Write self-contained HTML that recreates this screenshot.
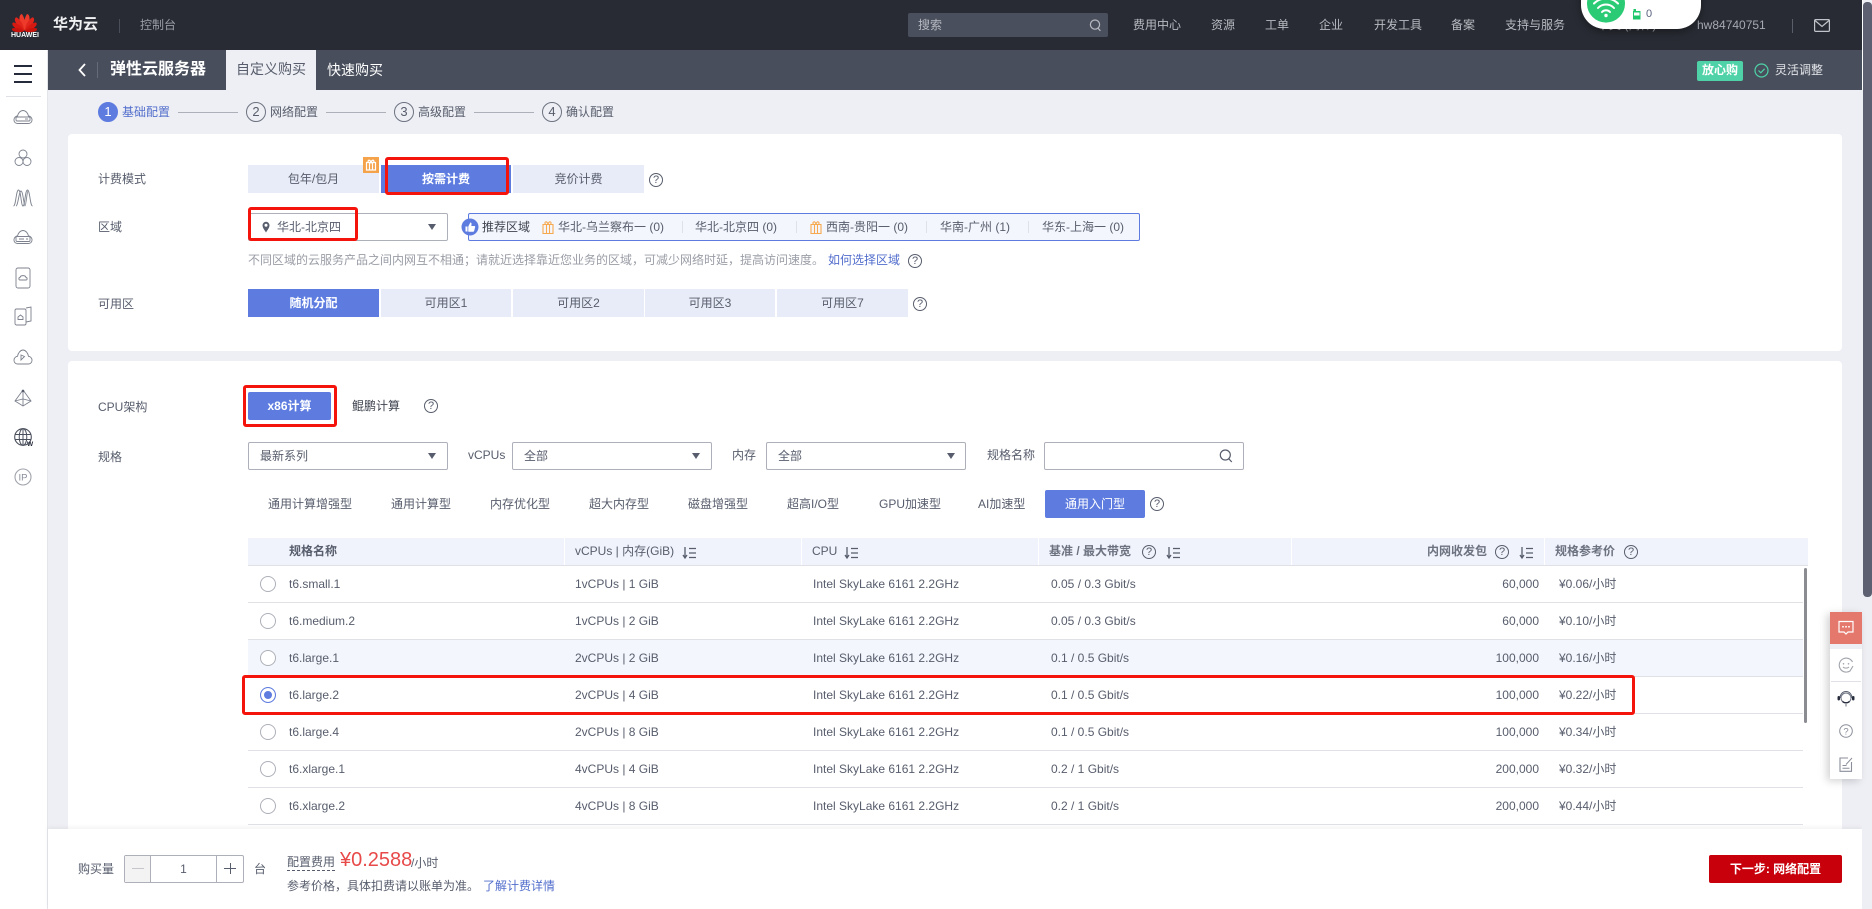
<!DOCTYPE html>
<html lang="zh-CN">
<head>
<meta charset="utf-8">
<title>弹性云服务器</title>
<style>
*{box-sizing:border-box}
html,body{margin:0;padding:0;width:1872px;height:909px;overflow:hidden;background:#eeeff4}
body{position:relative;font-family:"Liberation Sans","Noto Sans CJK SC",sans-serif;font-size:12px;color:#575d6c}
.a{position:absolute}
.t{position:absolute;white-space:nowrap;line-height:16px;height:16px}
.b{font-weight:700}
.btn{position:absolute;height:28px;line-height:29px;text-align:center;background:#e8ecf8;color:#575d6c;white-space:nowrap}
.btn.on{background:#5e7ce0;color:#fff;font-weight:700}
.red{position:absolute;border:3px solid #f5140c;border-radius:3px;z-index:5}
.sel{position:absolute;height:28px;border:1px solid #adb0b8;border-radius:2px;background:#fff;line-height:27px}
.tri{position:absolute;width:0;height:0;border-left:4.5px solid transparent;border-right:4.5px solid transparent;border-top:6px solid #575d6c}
.q{position:absolute;width:14px;height:14px;border:1px solid #575d6c;border-radius:50%;text-align:center;font-size:11px;line-height:12px;color:#575d6c}
.th{position:absolute;left:248px;top:538px;width:1560px;height:28px;background:#f0f3fb;border-bottom:1px solid #dfe1e6}
.sep{position:absolute;top:0;width:1px;height:27px;background:#fff}
.r{position:absolute;left:248px;width:1555px;height:37px;border-bottom:1px solid #dfe1e6;line-height:37px;white-space:nowrap}
.r span{position:absolute;top:0}
.r .n{left:41px}.r .v{left:327px}.r .c{left:565px}.r .w{left:803px}.r .k{right:264px}.r .p{left:1311px}
.r i{position:absolute;left:12px;top:10px;width:16px;height:16px;border:1px solid #adb0b8;border-radius:50%;background:#fff}
.hov{background:#f3f6fc}
.so{position:absolute;width:14px;height:12px}
.nav{position:absolute;top:17px;line-height:16px;color:#b8bac2;white-space:nowrap}
.step{position:absolute;top:102px;width:20px;height:20px;border:1px solid #6c7280;border-radius:50%;text-align:center;line-height:18px;font-size:13px;color:#575d6c}
.ln{position:absolute;top:112px;height:1px;background:#adb0b8;width:60px}
.vs{position:absolute;top:221px;width:1px;height:12px;background:#dfe1e6}
svg{position:absolute;overflow:visible}
.ic{stroke:#7d828e;fill:none;stroke-width:.9}
</style>
</head>
<body>
<!-- top bar -->
<div class="a" style="left:0;top:0;width:1862px;height:50px;background:#282b33"></div>
<svg style="left:11px;top:10px" width="27" height="21" viewBox="0 0 27 21">
<g fill="#e0261c" transform="translate(13.5 20.5)">
<path d="M-.4 0C-3-3-4-9-2.2-14.5-.8-17 .4-17 1-16 3-10 2-4 -.4 0Z" transform="rotate(-11)" fill="#ee3a2a"/>
<path d="M.4 0C3-3 4-9 2.2-14.5 .8-17-.4-17-1-16-3-10-2-4 .4 0Z" transform="rotate(11)" fill="#ee3a2a"/>
<path d="M-.4 0C-3-3-4-9-2.2-14C-.8-16 .4-16 1-15 3-10 2-4-.4 0Z" transform="rotate(-34)"/>
<path d="M.4 0C3-3 4-9 2.2-14 .8-16-.4-16-1-15-3-10-2-4 .4 0Z" transform="rotate(34)"/>
<path d="M-.4 0C-3-3-3.6-8-2-12.5-.8-14.5.4-14.5 1-13.5 2.6-9 2-4-.4 0Z" transform="rotate(-58)" fill="#d61a12"/>
<path d="M.4 0C3-3 3.6-8 2-12.5 .8-14.5-.4-14.5-1-13.5-2.6-9-2-4 .4 0Z" transform="rotate(58)" fill="#d61a12"/>
<path d="M-.4 0C-2.6-3-3-7-1.8-11-.8-13 .4-13 1-12 2.2-8 1.8-4-.4 0Z" transform="rotate(-84)" fill="#c8120c"/>
<path d="M.4 0C2.6-3 3-7 1.8-11 .8-13-.4-13-1-12-2.2-8-1.8-4 .4 0Z" transform="rotate(84)" fill="#c8120c"/>
</g></svg>
<div class="t b" style="left:11px;top:31px;width:27px;text-align:center;font-size:7px;line-height:9px;height:9px;color:#fff">HUAWEI</div>
<div class="t" style="left:53px;top:16px;height:18px;line-height:18px;font-size:15px;font-weight:700;color:#f0f1f3">华为云</div>
<div class="a" style="left:119px;top:19px;width:1px;height:14px;background:#4a4e59"></div>
<div class="t" style="left:140px;top:17px;color:#9a9da6">控制台</div>
<div class="a" style="left:908px;top:13px;width:200px;height:24px;background:#494f5c;border-radius:2px"></div>
<div class="t" style="left:918px;top:17px;color:#b8bac2">搜索</div>
<svg style="left:1089px;top:19px" width="13" height="13" viewBox="0 0 13 13"><circle cx="6" cy="5.6" r="4.6" fill="none" stroke="#b8bac2" stroke-width="1.2"/><path d="M9 9.2l2.4 2.6" stroke="#b8bac2" stroke-width="1.2"/></svg>
<div class="nav" style="left:1133px">费用中心</div>
<div class="nav" style="left:1211px">资源</div>
<div class="nav" style="left:1265px">工单</div>
<div class="nav" style="left:1319px">企业</div>
<div class="nav" style="left:1374px">开发工具</div>
<div class="nav" style="left:1451px">备案</div>
<div class="nav" style="left:1505px">支持与服务</div>
<div class="nav" style="left:1597px">中文 (简体)</div>
<div class="nav" style="left:1697px;color:#a6a9b2">hw84740751</div>
<div class="a" style="left:1792px;top:19px;width:1px;height:14px;background:#5a5e69"></div>
<svg style="left:1814px;top:19px" width="16" height="13" viewBox="0 0 16 13"><rect x=".6" y=".6" width="14.8" height="11.8" rx="1" fill="none" stroke="#c2c4cb" stroke-width="1.2"/><path d="M1 1.5l7 6 7-6" fill="none" stroke="#c2c4cb" stroke-width="1.2"/></svg>

<!-- floating pill -->
<div class="a" style="left:1581px;top:-30px;width:120px;height:59px;background:#fff;border-radius:24px;box-shadow:0 3px 8px rgba(0,0,0,.35);z-index:8"></div>
<svg style="left:1581px;top:0;z-index:9" width="120" height="29" viewBox="0 0 120 29">
<circle cx="25" cy="3.6" r="19" fill="#2bcb75"/>
<g fill="none" stroke="#fff" stroke-width="2" stroke-linecap="round"><path d="M13 3.5a17 17 0 0 1 24 0"/><path d="M17 8a11 11 0 0 1 16 0"/><path d="M21 12a5.500 5.500 0 0 1 8 0"/></g>
<circle cx="25" cy="15.500" r="1.700" fill="#fff"/>
<rect x="52" y="11" width="7.500" height="8.500" fill="#1fc76c"/><rect x="53" y="12.500" width="5.500" height="3" fill="#fff"/><rect x="52.500" y="9" width="2.500" height="2" fill="#1fc76c"/>
</svg>
<div class="t" style="left:1646px;top:6px;z-index:9;font-size:11px;color:#5a6380">0</div>

<!-- subheader -->
<div class="a" style="left:48px;top:50px;width:1814px;height:40px;background:#484e5b"></div>
<svg style="left:78px;top:63px" width="8" height="14" viewBox="0 0 8 14"><path d="M7 1L1.500 7 7 13" fill="none" stroke="#fff" stroke-width="1.800"/></svg>
<div class="a" style="left:97px;top:62px;width:1px;height:16px;background:#666b78"></div>
<div class="t b" style="left:110px;top:60px;height:20px;line-height:20px;font-size:16px;color:#fff">弹性云服务器</div>
<div class="a" style="left:226px;top:50px;width:90px;height:40px;background:#eeeff4;color:#575d6c;font-size:14px;line-height:39px;text-align:center">自定义购买</div>
<div class="t" style="left:327px;top:60px;height:20px;line-height:20px;font-size:14px;color:#fff">快速购买</div>
<div class="a b" style="left:1697px;top:61px;width:46px;height:20px;background:#4fd2a7;border-radius:2px;color:#fff;text-align:center;line-height:19px">放心购</div>
<svg style="left:1754px;top:63px" width="15" height="15" viewBox="0 0 15 15"><circle cx="7.500" cy="7.500" r="6.500" fill="none" stroke="#4fd2a7" stroke-width="1.200"/><path d="M4.500 7.500l2.300 2.300 3.800-4" fill="none" stroke="#4fd2a7" stroke-width="1.200"/></svg>
<div class="t" style="left:1775px;top:62px;color:#e3e5ea">灵活调整</div>

<!-- sidebar -->
<div class="a" style="left:0;top:50px;width:48px;height:859px;background:#fff;border-right:1px solid #e3e5ea"></div>
<div class="a" style="left:14px;top:65px;width:18px;height:2px;background:#252b3a"></div>
<div class="a" style="left:14px;top:73px;width:18px;height:2px;background:#252b3a"></div>
<div class="a" style="left:14px;top:81px;width:18px;height:2px;background:#252b3a"></div>
<div class="a" style="left:6px;top:96px;width:35px;height:1px;background:#dfe1e6"></div>
<svg style="left:13px;top:108px" width="20" height="18" viewBox="0 0 20 18"><path class="ic" d="M5 15.500C1.500 15.500.8 12.800 1 11.500 1.200 9.500 3 8 4.500 8 5 5 7.500 2.500 10 2.500S15 5 15.500 8C17 8 18.800 9.500 19 11.500 19.200 12.800 18.500 15.500 15 15.500Z"/><rect class="ic" x="3" y="9" width="14" height="4" rx="1"/><path class="ic" d="M12 11h3"/></svg>
<svg style="left:14px;top:148px" width="18" height="20" viewBox="0 0 18 20"><circle class="ic" cx="9" cy="6" r="4"/><circle class="ic" cx="5" cy="13.500" r="4"/><circle class="ic" cx="13" cy="13.500" r="4"/></svg>
<svg style="left:13px;top:188px" width="20" height="20" viewBox="0 0 20 20"><path class="ic" d="M.5 18C3 18 3 2 5.500 2S8 18 10 18 12 2 14.500 2 17 18 19.500 18"/><path class="ic" d="M3 18C5 18 6 3 8 3s3 15 4 15 2-15 3-15"/></svg>
<svg style="left:13px;top:228px" width="20" height="18" viewBox="0 0 20 18"><path class="ic" d="M5 15.500C1.500 15.500.8 12.800 1 11.500 1.200 9.500 3 8 4.500 8 5 5 7.500 2.500 10 2.500S15 5 15.500 8C17 8 18.800 9.500 19 11.500 19.200 12.800 18.500 15.500 15 15.500Z"/><rect class="ic" x="3" y="8.500" width="14" height="5" rx="1"/><path class="ic" d="M6 11h5M13 11h2"/></svg>
<svg style="left:15px;top:267px" width="16" height="22" viewBox="0 0 16 22"><rect class="ic" x="1" y="1" width="14" height="20" rx="2"/><path class="ic" d="M5 13c-1.500 0-1.500-2.500 0-2.500.5-2.500 5.500-2.500 6 0 1.500 0 1.500 2.500 0 2.500Z"/></svg>
<svg style="left:14px;top:306px" width="18" height="20" viewBox="0 0 18 20"><rect class="ic" x="1" y="3" width="11" height="16" rx="1.500"/><path class="ic" d="M12 2l5-1v14l-5 1"/><path class="ic" d="M4 13.500v-2.500l2.500-2 2.500 2v2.500Z"/></svg>
<svg style="left:13px;top:348px" width="20" height="18" viewBox="0 0 20 18"><path class="ic" d="M5 16C1.500 16 .8 13 1 11.800 1.200 9.800 3 8.300 4.500 8.300 5 5 7.500 2 10 2S15 5 15.500 8.300C17 8.300 18.800 9.800 19 11.800 19.200 13 18.500 16 15 16Z"/><path class="ic" d="M8 7v5l3.500-3.500Z"/></svg>
<svg style="left:14px;top:388px" width="18" height="20" viewBox="0 0 18 20"><path class="ic" d="M9 2L1 13l8 5 8-5Z"/><path class="ic" d="M9 2v16M1 13l8-2 8 2"/><circle cx="9" cy="3" r="1.300" fill="#575d6c"/></svg>
<svg style="left:14px;top:428px" width="19" height="19" viewBox="0 0 19 19"><circle cx="9" cy="9" r="8.300" fill="none" stroke="#4a4f5c" stroke-width="1.100"/><ellipse cx="9" cy="9" rx="3.800" ry="8.300" fill="none" stroke="#4a4f5c" stroke-width="1"/><path d="M1 6.500h16M1 11.500h16M9 .8v16.500" stroke="#4a4f5c" fill="none"/><text x="13" y="18" font-size="6.500" font-weight="700" fill="#252b3a" font-family="Liberation Sans">W</text></svg>
<svg style="left:14px;top:468px" width="18" height="18" viewBox="0 0 18 18"><circle cx="9" cy="9" r="8" fill="none" stroke="#a0a3ab" stroke-width="1.100"/><text x="9" y="12.500" text-anchor="middle" font-size="9.500" fill="#8a8e99" font-family="Liberation Sans">IP</text></svg>

<!-- steps -->
<div class="step" style="left:98px;background:#5e7ce0;border-color:#5e7ce0;color:#fff">1</div>
<div class="t" style="left:122px;top:104px;color:#526ecc">基础配置</div>
<div class="ln" style="left:178px"></div>
<div class="step" style="left:246px">2</div>
<div class="t" style="left:270px;top:104px">网络配置</div>
<div class="ln" style="left:326px"></div>
<div class="step" style="left:394px">3</div>
<div class="t" style="left:418px;top:104px">高级配置</div>
<div class="ln" style="left:474px"></div>
<div class="step" style="left:542px">4</div>
<div class="t" style="left:566px;top:104px">确认配置</div>

<!-- card 1 -->
<div class="a" style="left:68px;top:134px;width:1774px;height:217px;background:#fff;border-radius:4px"></div>
<div class="t" style="left:98px;top:171px">计费模式</div>
<div class="btn" style="left:248px;top:165px;width:131px">包年/包月</div>
<div class="btn on" style="left:381px;top:165px;width:130px">按需计费</div>
<div class="btn" style="left:513px;top:165px;width:131px">竞价计费</div>
<div class="q" style="left:649px;top:173px">?</div>
<svg style="left:363px;top:157px;z-index:6" width="16" height="16" viewBox="0 0 16 16"><rect width="16" height="16" fill="#f5a34a"/><path d="M3.500 5.500h9v7.500h-9ZM6.500 5.500v7.500M9.500 5.500v7.500M5.500 5.500C4 3 7 2 8 5.500 9 2 12 3 10.500 5.500" fill="none" stroke="#fff" stroke-width="1.200"/></svg>
<div class="red" style="left:385px;top:157px;width:124px;height:38px"></div>

<div class="t" style="left:98px;top:219px">区域</div>
<div class="sel" style="left:248px;top:213px;width:200px"></div>
<svg style="left:262px;top:221px" width="8" height="12" viewBox="0 0 8 12"><path d="M4 11.500C2.500 9 .5 6.800.5 4.300a3.500 3.500 0 0 1 7 0C7.500 6.800 5.500 9 4 11.500Z" fill="#575d6c"/><circle cx="4" cy="4.200" r="1.500" fill="#fff"/></svg>
<div class="t" style="left:277px;top:219px">华北-北京四</div>
<div class="tri" style="left:428px;top:224px"></div>
<div class="red" style="left:248px;top:207px;width:110px;height:34px"></div>
<div class="a" style="left:468px;top:213px;width:672px;height:28px;background:#f3f6fc;border:1px solid #5e7ce0;border-radius:2px"></div>
<svg style="left:461px;top:218px;z-index:2" width="18" height="18" viewBox="0 0 18 18"><circle cx="9" cy="9" r="8.500" fill="#5e7ce0"/><path d="M4.500 8.500h2v5h-2ZM7.300 8.500l2-4c1.300 0 1.500 1 1 3.500h3c.8 0 1 .6.800 1.200l-1 3.800c-.2.500-.5.700-1 .7H7.300Z" fill="#fff"/></svg>
<div class="t" style="left:482px;top:219px;color:#3f4450">推荐区域</div>
<svg style="left:542px;top:220px" width="12" height="14" viewBox="0 0 12 14"><path d="M1 4.500h10v9H1ZM4.500 4.500v9M7.500 4.500v9M3.500 4.500C1.500 1.500 5.500.5 6 4.500 6.500.5 10.500 1.500 8.500 4.500" fill="none" stroke="#f7a94f" stroke-width="1.100"/></svg>
<div class="t" style="left:558px;top:219px">华北-乌兰察布一 (0)</div>
<div class="vs" style="left:682px"></div>
<div class="t" style="left:695px;top:219px">华北-北京四 (0)</div>
<div class="vs" style="left:796px"></div>
<svg style="left:810px;top:220px" width="12" height="14" viewBox="0 0 12 14"><path d="M1 4.500h10v9H1ZM4.500 4.500v9M7.500 4.500v9M3.500 4.500C1.500 1.500 5.500.5 6 4.500 6.500.5 10.500 1.500 8.500 4.500" fill="none" stroke="#f7a94f" stroke-width="1.100"/></svg>
<div class="t" style="left:826px;top:219px">西南-贵阳一 (0)</div>
<div class="vs" style="left:926px"></div>
<div class="t" style="left:940px;top:219px">华南-广州 (1)</div>
<div class="vs" style="left:1028px"></div>
<div class="t" style="left:1042px;top:219px">华东-上海一 (0)</div>

<div class="t" style="left:248px;top:252px;color:#9a9da6">不同区域的云服务产品之间内网互不相通；请就近选择靠近您业务的区域，可减少网络时延，提高访问速度。</div>
<div class="t" style="left:828px;top:252px;color:#526ecc">如何选择区域</div>
<div class="q" style="left:908px;top:254px">?</div>

<div class="t" style="left:98px;top:296px">可用区</div>
<div class="btn on" style="left:248px;top:289px;width:131px">随机分配</div>
<div class="btn" style="left:381px;top:289px;width:130px">可用区1</div>
<div class="btn" style="left:513px;top:289px;width:131px">可用区2</div>
<div class="btn" style="left:645px;top:289px;width:130px">可用区3</div>
<div class="btn" style="left:777px;top:289px;width:131px">可用区7</div>
<div class="q" style="left:913px;top:297px">?</div>

<!-- card 2 -->
<div class="a" style="left:68px;top:361px;width:1774px;height:548px;background:#fff;border-radius:4px"></div>
<div class="t" style="left:98px;top:399px">CPU架构</div>
<div class="btn on" style="left:248px;top:392px;width:83px;border-radius:2px">x86计算</div>
<div class="red" style="left:243px;top:385px;width:94px;height:42px"></div>
<div class="t" style="left:352px;top:398px;color:#3f4450">鲲鹏计算</div>
<div class="q" style="left:424px;top:399px">?</div>

<div class="t" style="left:98px;top:449px">规格</div>
<div class="sel" style="left:248px;top:442px;width:200px;padding-left:11px">最新系列</div>
<div class="tri" style="left:428px;top:453px"></div>
<div class="t" style="left:468px;top:447px">vCPUs</div>
<div class="sel" style="left:512px;top:442px;width:200px;padding-left:11px">全部</div>
<div class="tri" style="left:692px;top:453px"></div>
<div class="t" style="left:732px;top:447px">内存</div>
<div class="sel" style="left:766px;top:442px;width:200px;padding-left:11px">全部</div>
<div class="tri" style="left:947px;top:453px"></div>
<div class="t" style="left:987px;top:447px">规格名称</div>
<div class="sel" style="left:1044px;top:442px;width:200px"></div>
<svg style="left:1219px;top:449px" width="14" height="14" viewBox="0 0 14 14"><circle cx="6.300" cy="6" r="5" fill="none" stroke="#575d6c" stroke-width="1.200"/><path d="M9.800 9.800l3 3.200" stroke="#575d6c" stroke-width="1.200"/></svg>

<div class="t" style="left:268px;top:496px">通用计算增强型</div>
<div class="t" style="left:391px;top:496px">通用计算型</div>
<div class="t" style="left:490px;top:496px">内存优化型</div>
<div class="t" style="left:589px;top:496px">超大内存型</div>
<div class="t" style="left:688px;top:496px">磁盘增强型</div>
<div class="t" style="left:787px;top:496px">超高I/O型</div>
<div class="t" style="left:879px;top:496px">GPU加速型</div>
<div class="t" style="left:978px;top:496px">AI加速型</div>
<div class="btn" style="left:1045px;top:490px;width:100px;background:#5e7ce0;color:#fff;border-radius:2px">通用入门型</div>
<div class="q" style="left:1150px;top:497px">?</div>

<!-- table -->
<div class="th">
<div class="sep" style="left:316px"></div><div class="sep" style="left:553px"></div><div class="sep" style="left:790px"></div><div class="sep" style="left:1043px"></div><div class="sep" style="left:1296px"></div>
</div>
<div class="t b" style="left:289px;top:543px">规格名称</div>
<div class="t" style="left:575px;top:543px;color:#575d6c">vCPUs | 内存(GiB)</div>
<svg class="so" style="left:682px;top:547px" viewBox="0 0 14 12"><path d="M3 0v10M1 8l2 3 2-3M7 1.500h7M7 6h7M7 10.500h7" fill="none" stroke="#575d6c" stroke-width="1.300"/></svg>
<div class="t" style="left:812px;top:543px;color:#575d6c">CPU</div>
<svg class="so" style="left:844px;top:547px" viewBox="0 0 14 12"><path d="M3 0v10M1 8l2 3 2-3M7 1.500h7M7 6h7M7 10.500h7" fill="none" stroke="#575d6c" stroke-width="1.300"/></svg>
<div class="t b" style="left:1049px;top:543px;color:#6c7280">基准 / 最大带宽</div>
<div class="q" style="left:1142px;top:545px">?</div>
<svg class="so" style="left:1166px;top:547px" viewBox="0 0 14 12"><path d="M3 0v10M1 8l2 3 2-3M7 1.500h7M7 6h7M7 10.500h7" fill="none" stroke="#575d6c" stroke-width="1.300"/></svg>
<div class="t b" style="left:1427px;top:543px;color:#6c7280">内网收发包</div>
<div class="q" style="left:1495px;top:545px">?</div>
<svg class="so" style="left:1519px;top:547px" viewBox="0 0 14 12"><path d="M3 0v10M1 8l2 3 2-3M7 1.500h7M7 6h7M7 10.500h7" fill="none" stroke="#575d6c" stroke-width="1.300"/></svg>
<div class="t b" style="left:1555px;top:543px;color:#6c7280">规格参考价</div>
<div class="q" style="left:1624px;top:545px">?</div>

<div class="r" style="top:566px"><i></i><span class="n">t6.small.1</span><span class="v">1vCPUs | 1 GiB</span><span class="c">Intel SkyLake 6161 2.2GHz</span><span class="w">0.05 / 0.3 Gbit/s</span><span class="k">60,000</span><span class="p">¥0.06/小时</span></div>
<div class="r" style="top:603px"><i></i><span class="n">t6.medium.2</span><span class="v">1vCPUs | 2 GiB</span><span class="c">Intel SkyLake 6161 2.2GHz</span><span class="w">0.05 / 0.3 Gbit/s</span><span class="k">60,000</span><span class="p">¥0.10/小时</span></div>
<div class="r hov" style="top:640px"><i></i><span class="n">t6.large.1</span><span class="v">2vCPUs | 2 GiB</span><span class="c">Intel SkyLake 6161 2.2GHz</span><span class="w">0.1 / 0.5 Gbit/s</span><span class="k">100,000</span><span class="p">¥0.16/小时</span></div>
<div class="r" style="top:677px"><i style="border-color:#5e7ce0;box-shadow:inset 0 0 0 3px #fff;background:#5e7ce0"></i><span class="n">t6.large.2</span><span class="v">2vCPUs | 4 GiB</span><span class="c">Intel SkyLake 6161 2.2GHz</span><span class="w">0.1 / 0.5 Gbit/s</span><span class="k">100,000</span><span class="p">¥0.22/小时</span></div>
<div class="r" style="top:714px"><i></i><span class="n">t6.large.4</span><span class="v">2vCPUs | 8 GiB</span><span class="c">Intel SkyLake 6161 2.2GHz</span><span class="w">0.1 / 0.5 Gbit/s</span><span class="k">100,000</span><span class="p">¥0.34/小时</span></div>
<div class="r" style="top:751px"><i></i><span class="n">t6.xlarge.1</span><span class="v">4vCPUs | 4 GiB</span><span class="c">Intel SkyLake 6161 2.2GHz</span><span class="w">0.2 / 1 Gbit/s</span><span class="k">200,000</span><span class="p">¥0.32/小时</span></div>
<div class="r" style="top:788px"><i></i><span class="n">t6.xlarge.2</span><span class="v">4vCPUs | 8 GiB</span><span class="c">Intel SkyLake 6161 2.2GHz</span><span class="w">0.2 / 1 Gbit/s</span><span class="k">200,000</span><span class="p">¥0.44/小时</span></div>
<div class="a" style="left:1804px;top:568px;width:3px;height:155px;background:#8a8c92;border-radius:2px"></div>
<div class="red" style="left:242px;top:675px;width:1393px;height:40px"></div>

<!-- right floating tools -->
<div class="a" style="left:1830px;top:612px;width:32px;height:167px;background:#fff;box-shadow:-3px 2px 8px rgba(0,0,0,.18);z-index:6"></div>
<div class="a" style="left:1830px;top:612px;width:32px;height:32px;background:#e5786d;z-index:7"></div>
<div class="a" style="left:1830px;top:644px;width:32px;height:5px;background:#eeeff4;z-index:7"></div>
<svg style="left:1838px;top:620px;z-index:8" width="16" height="16" viewBox="0 0 16 16"><path d="M1 1.500h14v10.500h-5l-2 2-2-2H1Z" fill="none" stroke="#fff" stroke-width="1.200"/><circle cx="5" cy="6.800" r=".9" fill="#fff"/><circle cx="8" cy="6.800" r=".9" fill="#fff"/><circle cx="11" cy="6.800" r=".9" fill="#fff"/></svg>
<svg style="left:1838px;top:657px;z-index:8" width="16" height="16" viewBox="0 0 16 16"><path d="M14.500 5A7 7 0 1 0 12 14l3-5" fill="none" stroke="#a0a3ab" stroke-width="1.100"/><circle cx="5.500" cy="6.800" r=".8" fill="#a0a3ab"/><circle cx="10.500" cy="6.800" r=".8" fill="#a0a3ab"/><path d="M5 10c1.500 1.500 4.500 1.500 6 0" fill="none" stroke="#a0a3ab"/></svg>
<div class="a" style="left:1831px;top:681px;width:30px;height:1px;background:#dfe1e6;z-index:8"></div>
<svg style="left:1837px;top:690px;z-index:8" width="18" height="18" viewBox="0 0 18 18"><circle cx="9" cy="8" r="5" fill="none" stroke="#6c7280" stroke-width="1"/><path d="M3 8a6 6.500 0 0 1 12 0" fill="none" stroke="#575d6c" stroke-width="1"/><rect x=".5" y="6" width="2.500" height="4.500" rx="1.200" fill="#252b3a"/><rect x="15" y="6" width="2.500" height="4.500" rx="1.200" fill="#252b3a"/><path d="M5.500 11.500c2 1.800 5 1.800 7 0" fill="none" stroke="#252b3a" stroke-width="1.400"/><path d="M9 14v2.500" stroke="#6c7280"/></svg>
<svg style="left:1839px;top:724px;z-index:8" width="14" height="14" viewBox="0 0 14 14"><circle cx="7" cy="7" r="6.300" fill="none" stroke="#8a8e99" stroke-width="1"/><text x="7" y="10.500" text-anchor="middle" font-size="9.500" fill="#8a8e99" font-family="Liberation Sans">?</text></svg>
<svg style="left:1839px;top:757px;z-index:8" width="14" height="15" viewBox="0 0 14 15"><path d="M12.500 5v9.300H1V1h8" fill="none" stroke="#8a8e99" stroke-width="1.100"/><path d="M7 7.500L13 1M3.500 8.500h4M3.500 11.300h7" fill="none" stroke="#8a8e99"/></svg>

<!-- bottom bar -->
<div class="a" style="left:48px;top:829px;width:1814px;height:80px;background:#fff;box-shadow:0 -2px 4px rgba(0,0,0,.05)"></div>
<div class="t" style="left:78px;top:861px">购买量</div>
<div class="a" style="left:124px;top:855px;width:120px;height:28px;border:1px solid #adb0b8;border-radius:2px;background:#fff"></div>
<div class="a" style="left:125px;top:856px;width:26px;height:26px;background:#f3f3f3;border-right:1px solid #adb0b8"></div>
<div class="a" style="left:132px;top:868px;width:12px;height:1px;background:#c4c6cc"></div>
<div class="t" style="left:151px;top:861px;width:65px;text-align:center">1</div>
<div class="a" style="left:216px;top:856px;width:1px;height:26px;background:#adb0b8"></div>
<div class="a" style="left:224px;top:868px;width:12px;height:1px;background:#575d6c"></div>
<div class="a" style="left:230px;top:863px;width:1px;height:11px;background:#575d6c"></div>
<div class="t" style="left:254px;top:861px">台</div>
<div class="t" style="left:287px;top:854px;height:17px;border-bottom:1px dashed #575d6c">配置费用</div>
<div class="t" style="left:340px;top:848px;height:24px;line-height:24px;font-size:20px;color:#e84a4a">¥0.2588</div>
<div class="t" style="left:411px;top:855px">/小时</div>
<div class="t" style="left:287px;top:878px">参考价格，具体扣费请以账单为准。</div>
<div class="t" style="left:483px;top:878px;color:#526ecc">了解计费详情</div>
<div class="a b" style="left:1709px;top:855px;width:133px;height:28px;background:#c7000b;color:#fff;border-radius:2px;text-align:center;line-height:28px">下一步: 网络配置</div>

<!-- page scrollbar -->
<div class="a" style="left:1862px;top:0;width:10px;height:909px;background:#eeeff4"></div>
<div class="a" style="left:1862px;top:0;width:1px;height:90px;background:#fff"></div>
<div class="a" style="left:1863px;top:2px;width:9px;height:595px;background:#5c6070;border-radius:4px"></div>
</body>
</html>
